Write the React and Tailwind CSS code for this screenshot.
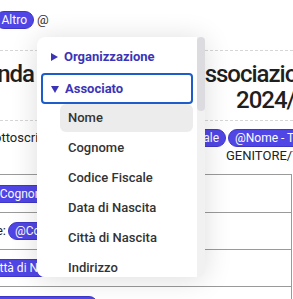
import React from 'react';

const fields = ['Nome', 'Cognome', 'Codice Fiscale', 'Data di Nascita', 'Città di Nascita', 'Indirizzo'];

function Chip({ children, className = '' }) {
    return (
        <span
            className={`inline-flex h-[18px] shrink-0 items-center rounded-full border border-[#3f37c9] bg-[#5046e5] px-[6px] text-[12px] leading-none text-white whitespace-nowrap ${className}`}
        >
            {children}
        </span>
    );
}

function Caret({ down = false }) {
    return (
        <svg width="8" height="8" viewBox="0 0 8 8" className="shrink-0 fill-[#3c34b6]">
            {down ? <polygon points="0,1 8,1 4,8" /> : <polygon points="1,0 8,4 1,8" />}
        </svg>
    );
}

export default function App() {
    return (
        <div className="relative h-[299px] w-[293px] overflow-hidden bg-white font-['Roboto',sans-serif]">
            {/* documento */}
            <div className="whitespace-nowrap pt-[11px] text-[#222]">
                <div className="flex h-[18px] items-center">
                    <div className="flex w-[34px] shrink-0 justify-end">
                        <Chip>Altro</Chip>
                    </div>
                    <span className="ml-[3px] text-[13px] text-[#333]">@</span>
                </div>

                <div className="mt-[21px] border-t border-dashed border-[#d6d6d6]" />

                <h1 className="mt-[10px] text-[24px] font-medium leading-[26px] tracking-[-1px] text-[#1f1f1f]">
                    <div className="-ml-[62px] [word-spacing:4px]">Domanda di adesione all'associazione</div>
                    <div className="pl-[236px]">2024/2025</div>
                </h1>

                <div className="mt-[7px] border-t border-dashed border-[#d6d6d6]" />

                <div className="mt-[8px] flex h-[18px] items-center text-[13px]">
                    <div className="flex w-[226px] shrink-0 items-center">
                        <span className="-ml-[42px] mr-auto">Il/La sottoscritto/a</span>
                        <Chip>@Codice Fiscale</Chip>
                    </div>
                    <Chip className="ml-[2px]">@Nome - Tutore</Chip>
                </div>
                <div className="pl-[226px] text-[13px] leading-[18px]">GENITORE/TUTORE</div>

                <div className="-ml-[40px] mt-[9px] w-[332px] border border-[#9a9a9a] text-[13px]">
                    <div className="flex h-[38px] items-center border-b border-[#9a9a9a] pl-[21px]">
                        <Chip>@Cognome</Chip>
                    </div>
                    <div className="flex h-[37px] items-center border-b border-[#9a9a9a]">
                        <span className="flex w-[45px] shrink-0 justify-end">Codice Fiscale:</span>
                        <Chip className="ml-[2px]">@Codice Fiscale</Chip>
                    </div>
                    <div className="flex h-[37px] items-center border-b border-[#9a9a9a] pl-[10px]">
                        <Chip>@Città di Nascita</Chip>
                    </div>
                    <div className="flex h-[37px] items-start pt-[9px]">
                        <span className="flex w-[137px] shrink-0 justify-end">
                            <Chip>@Indirizzo di Residenza</Chip>
                        </span>
                    </div>
                </div>
            </div>

            {/* menu menzioni */}
            <div className="absolute left-[37px] top-[37px] z-10 flex h-[240px] w-[168px] rounded-lg bg-[#f1f1f1] shadow-[0_2px_28px_rgba(0,0,0,0.14)]">
                <div className="w-[160px] overflow-hidden rounded-l-lg bg-white pt-[4px]">
                    <div className="mx-[4px] flex h-[32px] items-center gap-[6px] border-2 border-transparent pl-[7px] text-[13px] font-bold text-[#3c34b6]">
                        <Caret />
                        Organizzazione
                    </div>
                    <div className="mx-[4px] flex h-[31px] items-center gap-[6px] rounded-[4px] border-2 border-[#1d5cc9] pl-[8px] text-[13px] font-bold text-[#3c34b6]">
                        <Caret down />
                        Associato
                    </div>
                    <ul className="ml-[23px] mr-[4px]">
                        {fields.map((f, i) => (
                            <li
                                key={f}
                                className={`flex h-[28px] items-center rounded-md pl-[8px] text-[13px] font-medium text-[#333] ${
                                    i === 0 ? 'bg-[#ececec]' : 'mt-[2px]'
                                }`}
                            >
                                {f}
                            </li>
                        ))}
                    </ul>
                </div>
                <div className="w-[8px]">
                    <div className="h-[74px] rounded-full bg-[#dcdce0]" />
                </div>
            </div>
        </div>
    );
}
